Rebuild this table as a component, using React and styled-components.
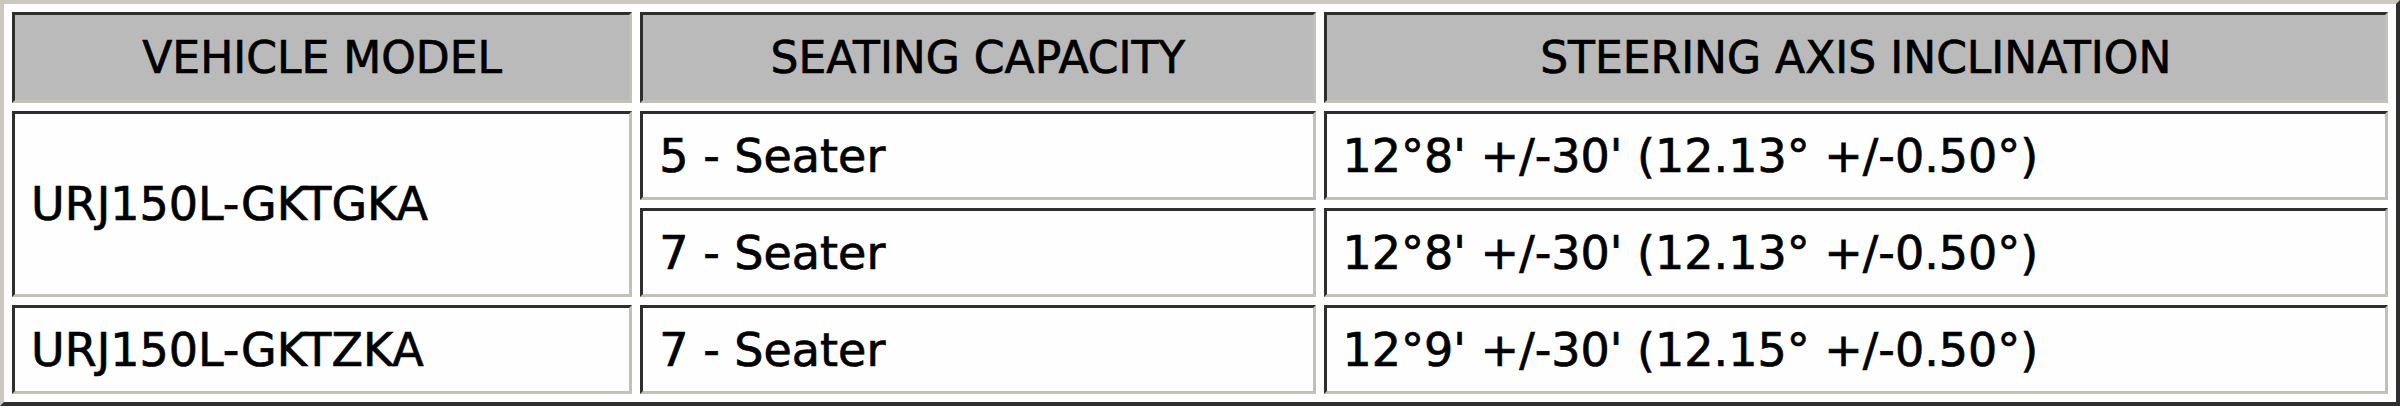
import React from 'react'
import styled, { createGlobalStyle } from 'styled-components'

const GlobalStyle = createGlobalStyle`
  html, body {
    margin: 0;
    padding: 0;
    background: #ffffff;
  }
  body {
    font-family: "DejaVu Sans", Verdana, sans-serif;
  }
`

const SpecTable = styled.table`
  width: 2400px;
  table-layout: fixed;
  border-collapse: separate;
  border-spacing: 8px;
  border-width: 4px;
  border-style: solid;
  border-color: #cbc8c1 #2e2e2e #2e2e2e #cbc8c1;
  background: #ffffff;
`

const Cell = styled.td`
  box-sizing: border-box;
  height: ${(p) => (p.$head ? 91 : 89)}px;
  padding: 0 0 0 16px;
  border-width: 3px;
  border-style: solid;
  border-color: #2e2e2e #c3c0b8 #c3c0b8 #2e2e2e;
  background: #fefefe;
  color: #000;
  font-size: 46px;
  line-height: 1;
  -webkit-text-stroke: 0.7px #000;
  white-space: nowrap;
  vertical-align: middle;
`

const HeadCell = styled(Cell).attrs({ as: 'th', $head: true })`
  padding: 0;
  background: #bababa;
  font-size: 44px;
  font-weight: normal;
  text-align: center;
  text-transform: uppercase;
`

const rows = [
  { model: 'URJ150L-GKTGKA', span: 2, seats: '5 - Seater', angle: "12°8' +/-30' (12.13° +/-0.50°)" },
  { seats: '7 - Seater', angle: "12°8' +/-30' (12.13° +/-0.50°)" },
  { model: 'URJ150L-GKTZKA', span: 1, seats: '7 - Seater', angle: "12°9' +/-30' (12.15° +/-0.50°)" },
]

const App = () => (
  <>
    <GlobalStyle />
    <SpecTable>
      <colgroup>
        <col style={{ width: 620 }} />
        <col style={{ width: 675 }} />
        <col style={{ width: 1064 }} />
      </colgroup>
      <thead>
        <tr>
          <HeadCell>Vehicle Model</HeadCell>
          <HeadCell>Seating Capacity</HeadCell>
          <HeadCell>Steering Axis Inclination</HeadCell>
        </tr>
      </thead>
      <tbody>
        {rows.map((r, i) => (
          <tr key={i}>
            {r.model && <Cell rowSpan={r.span}>{r.model}</Cell>}
            <Cell>{r.seats}</Cell>
            <Cell>{r.angle}</Cell>
          </tr>
        ))}
      </tbody>
    </SpecTable>
  </>
)

export default App
